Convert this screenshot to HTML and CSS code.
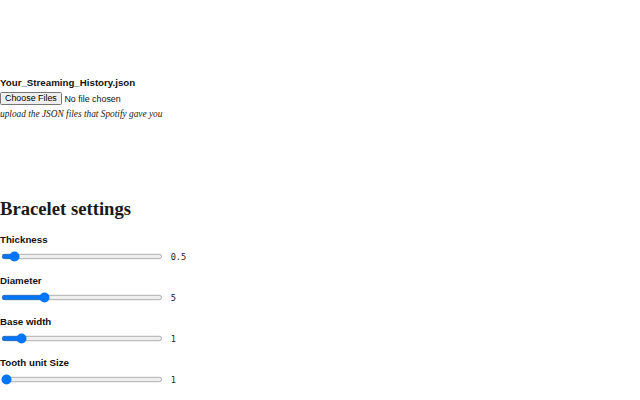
FILE: index.html
```html
<!DOCTYPE html>
<html>
<head>
	<title>Bracelet</title>
	<meta charset="utf-8">
	<link rel="stylesheet" href="styles.css">
</head>
<body>
	<!--file upload-->
	<section class="upload">
		<label class="label" for="history">Your_Streaming_History.json</label>
		<input id="history" type="file" multiple>
		<p class="hint">upload the JSON files that Spotify gave you</p>
	</section>

	<!--bracelet settings-->
	<section class="settings">
		<h2>Bracelet settings</h2>
		<div class="setting">
			<label class="label" for="thickness">Thickness</label>
			<div class="row">
				<input id="thickness" type="range" min="0" max="10" step="0.1" value="0.5">
				<output class="value">0.5</output>
			</div>
		</div>
		<div class="setting">
			<label class="label" for="diameter">Diameter</label>
			<div class="row">
				<input id="diameter" type="range" min="0" max="20" step="1" value="5">
				<output class="value">5</output>
			</div>
		</div>
		<div class="setting">
			<label class="label" for="base">Base width</label>
			<div class="row">
				<input id="base" type="range" min="0" max="10" step="0.5" value="1">
				<output class="value">1</output>
			</div>
		</div>
		<div class="setting">
			<label class="label" for="tooth">Tooth unit Size</label>
			<div class="row">
				<input id="tooth" type="range" min="1" max="10" step="1" value="1">
				<output class="value">1</output>
			</div>
		</div>
	</section>
</body>
</html>
```

FILE: styles.css
```css
html{
	overflow: hidden;
}

body{
	margin: 0;
	zoom: 0.6667;
	font-family: "Liberation Sans", Arial, sans-serif;
	color: #111;
}

.upload{
	display: flex;
	flex-direction: column;
	align-items: flex-start;
	padding-top: 114.75px;
}

.label{
	display: block;
	font-weight: bold;
	font-size: 14.6px;
	line-height: 16.5px;
}

#history{
	margin-top: 6.5px;
}

.hint{
	margin: 5.5px 0 0;
	font-family: "Liberation Serif", serif;
	font-style: italic;
	font-size: 14px;
	line-height: 16px;
	color: #222;
}

.settings{
	padding-top: 117.5px;
}

h2{
	font-family: "Liberation Serif", serif;
	font-size: 28px;
	line-height: 32px;
	margin: 0 0 23px;
	color: #1a1a1a;
}

.setting{
	margin-bottom: 18px;
}

.row{
	display: flex;
	align-items: center;
	gap: 9px;
	margin-top: 7px;
}

.row input[type=range]{
	width: 243px;
	margin: 2px;
}

.value{
	font-family: "DejaVu Sans Mono", monospace;
	font-size: 13px;
	color: #222;
}
```
